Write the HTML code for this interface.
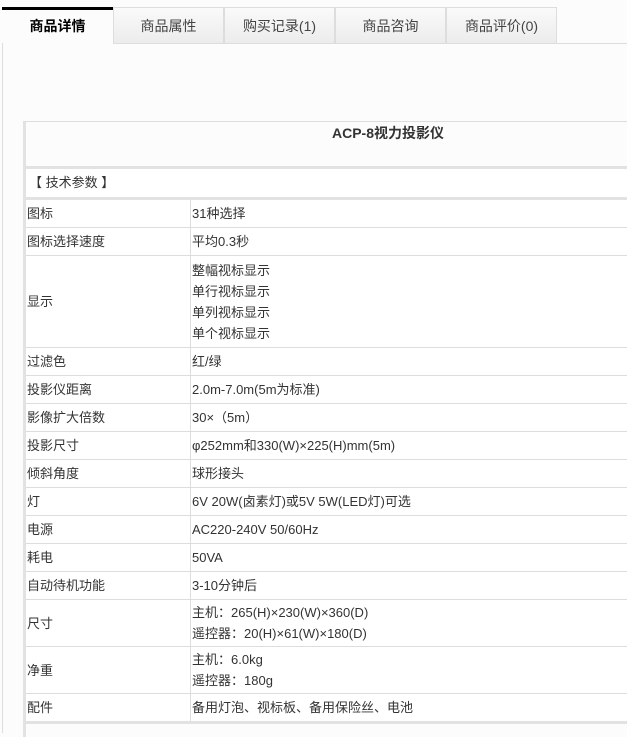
<!DOCTYPE html>
<html><head><meta charset="utf-8"><style>
body{margin:0;width:627px;height:733px;overflow:hidden;background:#fcfcfc;font-family:"Liberation Sans","Noto Sans CJK SC",sans-serif;color:#333;font-size:13px;position:relative}
.tabs{position:absolute;top:7px;left:2px;height:36px;width:625px;border-bottom:1px solid #ddd}
.tab{position:absolute;top:0;height:36px;line-height:36px;text-align:center;font-size:14px;color:#444;background:linear-gradient(#fafafa,#ececec);border:1px solid #ddd;border-bottom:none;box-sizing:border-box}
.tab.act{background:#fcfcfc;border:none;border-top:3px solid #000;font-weight:bold;color:#000;line-height:32px;height:37px}
.vl{position:absolute;left:2px;top:43px;width:1px;height:690px;background:#ddd}
.box{position:absolute;left:23px;top:121px;width:620px;height:615px;border-left:3px solid #e2e2e2;border-top:1px solid #ddd;background:#fcfcfc}
.title{position:absolute;left:0;top:0;width:724px;height:43px;text-align:center;font-weight:bold;font-size:14px;line-height:22px}
.sec{position:absolute;left:0;top:44px;width:620px;height:29px;border-top:3px solid #e2e2e2;line-height:28px;padding-left:3px;background:#fff}
table{position:absolute;left:0;top:75px;border-collapse:collapse;width:620px;border-top:3px solid #e2e2e2;background:#fff}
td{border-bottom:1px solid #ddd;padding:0 0 0 1px;vertical-align:middle;line-height:21px;height:27px}
td.l{width:163px;border-right:1px solid #ddd}
.end{position:absolute;left:0;top:599px;width:620px;height:3px;background:#e2e2e2}
</style></head><body>
<div class="tabs">
<div class="tab act" style="left:0;width:111px">商品详情</div>
<div class="tab" style="left:111px;width:111px">商品属性</div>
<div class="tab" style="left:222px;width:111px">购买记录(1)</div>
<div class="tab" style="left:333px;width:111px">商品咨询</div>
<div class="tab" style="left:444px;width:111px">商品评价(0)</div>
</div>
<div class="vl"></div>
<div class="box">
<div class="title">ACP-8视力投影仪</div>
<div class="sec">【 技术参数 】</div>
<table>
<tr><td class="l">图标</td><td>31种选择</td></tr>
<tr><td class="l">图标选择速度</td><td>平均0.3秒</td></tr>
<tr><td class="l" style="height:91px">显示</td><td>整幅视标显示<br>单行视标显示<br>单列视标显示<br>单个视标显示</td></tr>
<tr><td class="l">过滤色</td><td>红/绿</td></tr>
<tr><td class="l">投影仪距离</td><td>2.0m-7.0m(5m为标准)</td></tr>
<tr><td class="l">影像扩大倍数</td><td>30×（5m）</td></tr>
<tr><td class="l">投影尺寸</td><td>φ252mm和330(W)×225(H)mm(5m)</td></tr>
<tr><td class="l">倾斜角度</td><td>球形接头</td></tr>
<tr><td class="l">灯</td><td>6V 20W(卤素灯)或5V 5W(LED灯)可选</td></tr>
<tr><td class="l">电源</td><td>AC220-240V 50/60Hz</td></tr>
<tr><td class="l">耗电</td><td>50VA</td></tr>
<tr><td class="l">自动待机功能</td><td>3-10分钟后</td></tr>
<tr><td class="l" style="height:46px">尺寸</td><td>主机：265(H)×230(W)×360(D)<br>遥控器：20(H)×61(W)×180(D)</td></tr>
<tr><td class="l" style="height:46px">净重</td><td>主机：6.0kg<br>遥控器：180g</td></tr>
<tr><td class="l" style="height:26px">配件</td><td>备用灯泡、视标板、备用保险丝、电池</td></tr>
</table>
<div class="end"></div>
</div>
</body></html>
